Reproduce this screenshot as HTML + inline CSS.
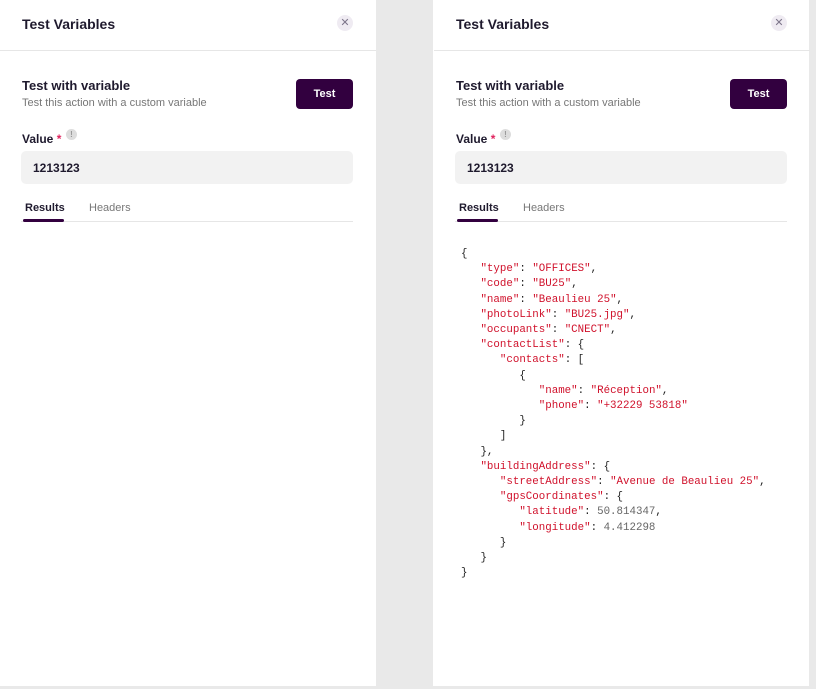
<!DOCTYPE html>
<html><head><meta charset="utf-8"><style>
*{margin:0;padding:0;box-sizing:border-box}
body{width:816px;height:689px;background:#e9e9e9;position:relative;overflow:hidden;font-family:"Liberation Sans",sans-serif;color:#1f1a2e}
.p{position:absolute;top:0;width:376px;height:686px;background:#fff}
.t{position:absolute;left:22px;top:16px;font-size:14px;font-weight:bold}
.x{position:absolute;left:337px;top:15px;width:16px;height:16px;border-radius:50%;background:#efebf2;color:#7d758a;font-size:11px;line-height:16px;text-align:center}
.hd{position:absolute;left:0;right:0;top:50px;border-top:1px solid #e6e6e6}
.h2{position:absolute;left:22px;top:78px;font-size:13px;font-weight:bold}
.sub{position:absolute;left:22px;top:97px;font-size:11px;color:#777}
.btn{position:absolute;left:296px;top:79px;width:57px;height:30px;background:#32003f;border-radius:4px;color:#fff;font-size:11px;font-weight:bold;text-align:center;line-height:30px}
.vl{position:absolute;left:22px;top:132px;font-size:12px;font-weight:bold}
.vl b{color:#e0245e}
.i{position:absolute;left:66px;top:129px;width:11px;height:11px;border-radius:50%;background:#ddd;color:#999;font-size:8px;text-align:center;line-height:11px;font-weight:bold}
.in{position:absolute;left:21px;top:151px;width:332px;height:33px;background:#f2f2f2;border-radius:5px;font-size:12px;font-weight:bold;padding:10px 12px}
.tb{position:absolute;top:202px;font-size:11px}
.ul{position:absolute;left:23px;top:219px;width:41px;height:3px;background:#32003f;border-radius:2px}
.dv{position:absolute;left:21px;top:221px;width:332px;border-top:1px solid #e6e6e6}
pre{position:absolute;left:461px;top:247px;font-family:"Liberation Mono",monospace;font-size:10.8px;line-height:15.2px;color:#222}
.s{color:#d0112b}.n{color:#666}
</style></head><body>
<div class="p" style="left:0"></div>
<div class="p" style="left:433px"></div>
<div style="position:absolute;left:0;top:0;width:376px;height:686px">
<div class="t">Test Variables</div><div class="x">✕</div><div class="hd"></div>
<div class="h2">Test with variable</div><div class="sub">Test this action with a custom variable</div>
<div class="btn">Test</div>
<div class="vl">Value <b>*</b></div><div class="i">!</div>
<div class="in">1213123</div>
<div class="tb" style="left:25px;font-weight:bold">Results</div><div class="tb" style="left:89px;color:#777">Headers</div>
<div class="dv"></div><div class="ul"></div>
</div>
<div style="position:absolute;left:434px;top:0;width:376px;height:686px">
<div class="t">Test Variables</div><div class="x">✕</div><div class="hd"></div>
<div class="h2">Test with variable</div><div class="sub">Test this action with a custom variable</div>
<div class="btn">Test</div>
<div class="vl">Value <b>*</b></div><div class="i">!</div>
<div class="in">1213123</div>
<div class="tb" style="left:25px;font-weight:bold">Results</div><div class="tb" style="left:89px;color:#777">Headers</div>
<div class="dv"></div><div class="ul"></div>
</div>
<pre>{
   <span class="s">"type"</span>: <span class="s">"OFFICES"</span>,
   <span class="s">"code"</span>: <span class="s">"BU25"</span>,
   <span class="s">"name"</span>: <span class="s">"Beaulieu 25"</span>,
   <span class="s">"photoLink"</span>: <span class="s">"BU25.jpg"</span>,
   <span class="s">"occupants"</span>: <span class="s">"CNECT"</span>,
   <span class="s">"contactList"</span>: {
      <span class="s">"contacts"</span>: [
         {
            <span class="s">"name"</span>: <span class="s">"Réception"</span>,
            <span class="s">"phone"</span>: <span class="s">"+32229 53818"</span>
         }
      ]
   },
   <span class="s">"buildingAddress"</span>: {
      <span class="s">"streetAddress"</span>: <span class="s">"Avenue de Beaulieu 25"</span>,
      <span class="s">"gpsCoordinates"</span>: {
         <span class="s">"latitude"</span>: <span class="n">50.814347</span>,
         <span class="s">"longitude"</span>: <span class="n">4.412298</span>
      }
   }
}</pre>
</body></html>
